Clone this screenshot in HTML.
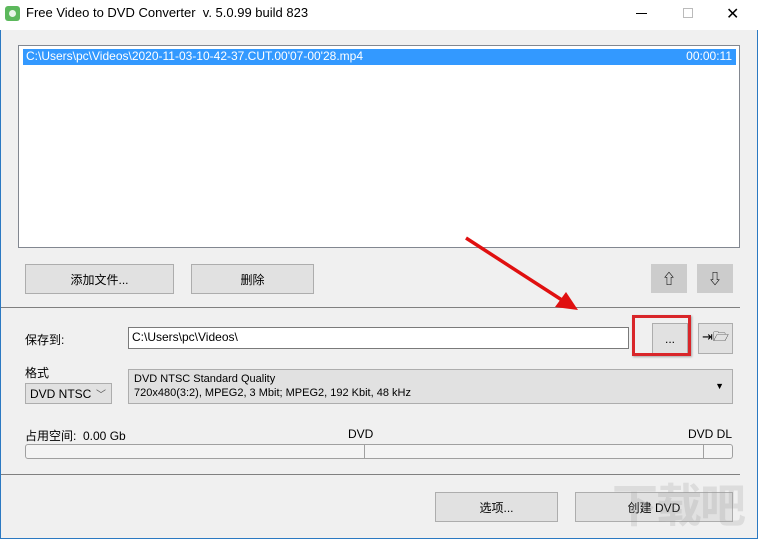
<!DOCTYPE html><html style="width:758px;height:539px;overflow:hidden"><head><meta charset="utf-8"><style>
*{box-sizing:border-box;margin:0;padding:0}
body{width:758px;height:539px;overflow:hidden;background:#f0f0f0;font-family:"Liberation Sans","Noto Sans CJK SC",sans-serif;font-size:12px;color:#000;position:relative}
.a{position:absolute;white-space:nowrap}
.btn{position:absolute;background:#e1e1e1;border:1px solid #adadad;display:flex;align-items:center;justify-content:center;font-size:12px;white-space:nowrap}
</style></head><body>
<div class="a" style="left:0;top:0;width:758px;height:539px;border:1px solid #2b79c2;border-top:none"></div>
<div class="a" style="left:0;top:0;width:758px;height:30px;background:#fff"></div>
<div class="a" style="left:5px;top:6px;width:15px;height:15px;background:#5cb85c;border-radius:3px"></div>
<div class="a" style="left:9px;top:10px;width:7px;height:7px;background:#e8f5e8;border-radius:50%"></div>
<div class="a" style="left:26px;top:5px;font-size:13px">Free Video to DVD Converter&nbsp; v. 5.0.99 build 823</div>
<div class="a" style="left:636px;top:13px;width:11px;height:1px;background:#000"></div>
<div class="a" style="left:683px;top:8px;width:10px;height:10px;border:1px solid #bbb"></div>
<div class="a" style="left:726px;top:4px;font-size:16px">✕</div>
<div class="a" style="left:18px;top:45px;width:722px;height:203px;background:#fff;border:1px solid #828790"></div>
<div class="a" style="left:23px;top:49px;width:713px;height:16px;background:#3399ff;color:#fff;padding-left:3px;line-height:15px">C:\Users\pc\Videos\2020-11-03-10-42-37.CUT.00'07-00'28.mp4<span style="position:absolute;right:4px">00:00:11</span></div>
<div class="btn" style="left:25px;top:264px;width:149px;height:30px">添加文件...</div>
<div class="btn" style="left:191px;top:264px;width:123px;height:30px">删除</div>
<div class="btn" style="left:651px;top:264px;width:36px;height:29px;background:#ccc;border-color:#ccc;font-size:14px">⇧</div>
<div class="btn" style="left:697px;top:264px;width:36px;height:29px;background:#ccc;border-color:#ccc;font-size:14px">⇩</div>
<div class="a" style="left:1px;top:307px;width:739px;height:1px;background:#808080"></div>
<div class="a" style="left:25px;top:331px">保存到:</div>
<div class="a" style="left:128px;top:327px;width:501px;height:22px;background:#fff;border:1px solid #7a7a7a;padding:2px 3px">C:\Users\pc\Videos\</div>
<div class="btn" style="left:652px;top:323px;width:36px;height:31px">...</div>
<div class="btn" style="left:698px;top:323px;width:35px;height:31px;font-size:13px">⇥🗁</div>
<div class="a" style="left:632px;top:315px;width:59px;height:41px;border:3px solid #d9262a;box-shadow:1px 1px 2px rgba(0,0,0,.3)"></div>
<div class="a" style="left:25px;top:364px">格式</div>
<div class="btn" style="left:25px;top:383px;width:87px;height:21px;justify-content:flex-start;padding-left:4px">DVD NTSC<span style="position:absolute;right:5px;font-size:10px;color:#555">﹀</span></div>
<div class="a" style="left:128px;top:369px;width:605px;height:35px;background:#e1e1e1;border:1px solid #adadad;padding:2px 5px;font-size:11px;line-height:14px">DVD NTSC Standard Quality<br>720x480(3:2), MPEG2, 3 Mbit; MPEG2, 192 Kbit, 48 kHz<span style="position:absolute;right:8px;top:9px;font-size:9px">▼</span></div>
<div class="a" style="left:25px;top:427px">占用空间:&nbsp; 0.00 Gb</div>
<div class="a" style="left:348px;top:427px">DVD</div>
<div class="a" style="left:688px;top:427px">DVD DL</div>
<div class="a" style="left:25px;top:444px;width:708px;height:15px;border:1px solid #a0a0a0;border-radius:3px;background:#f4f4f4"></div>
<div class="a" style="left:364px;top:444px;width:1px;height:15px;background:#a0a0a0"></div>
<div class="a" style="left:703px;top:444px;width:1px;height:15px;background:#a0a0a0"></div>
<div class="a" style="left:1px;top:474px;width:739px;height:1px;background:#808080"></div>
<div class="btn" style="left:435px;top:492px;width:123px;height:30px">选项...</div>
<div class="btn" style="left:575px;top:492px;width:158px;height:30px">创建 DVD</div>
<div class="a" style="left:612px;top:478px;font-size:46px;line-height:56px;color:rgba(150,150,150,.22);font-weight:bold;letter-spacing:-2px">下载吧</div>
<svg class="a" style="left:0;top:0" width="758" height="539"><line x1="466" y1="238" x2="565" y2="302" stroke="#e01010" stroke-width="3.5"/><polygon points="578,310 555,307 566,292" fill="#e01010"/></svg>
</body></html>
